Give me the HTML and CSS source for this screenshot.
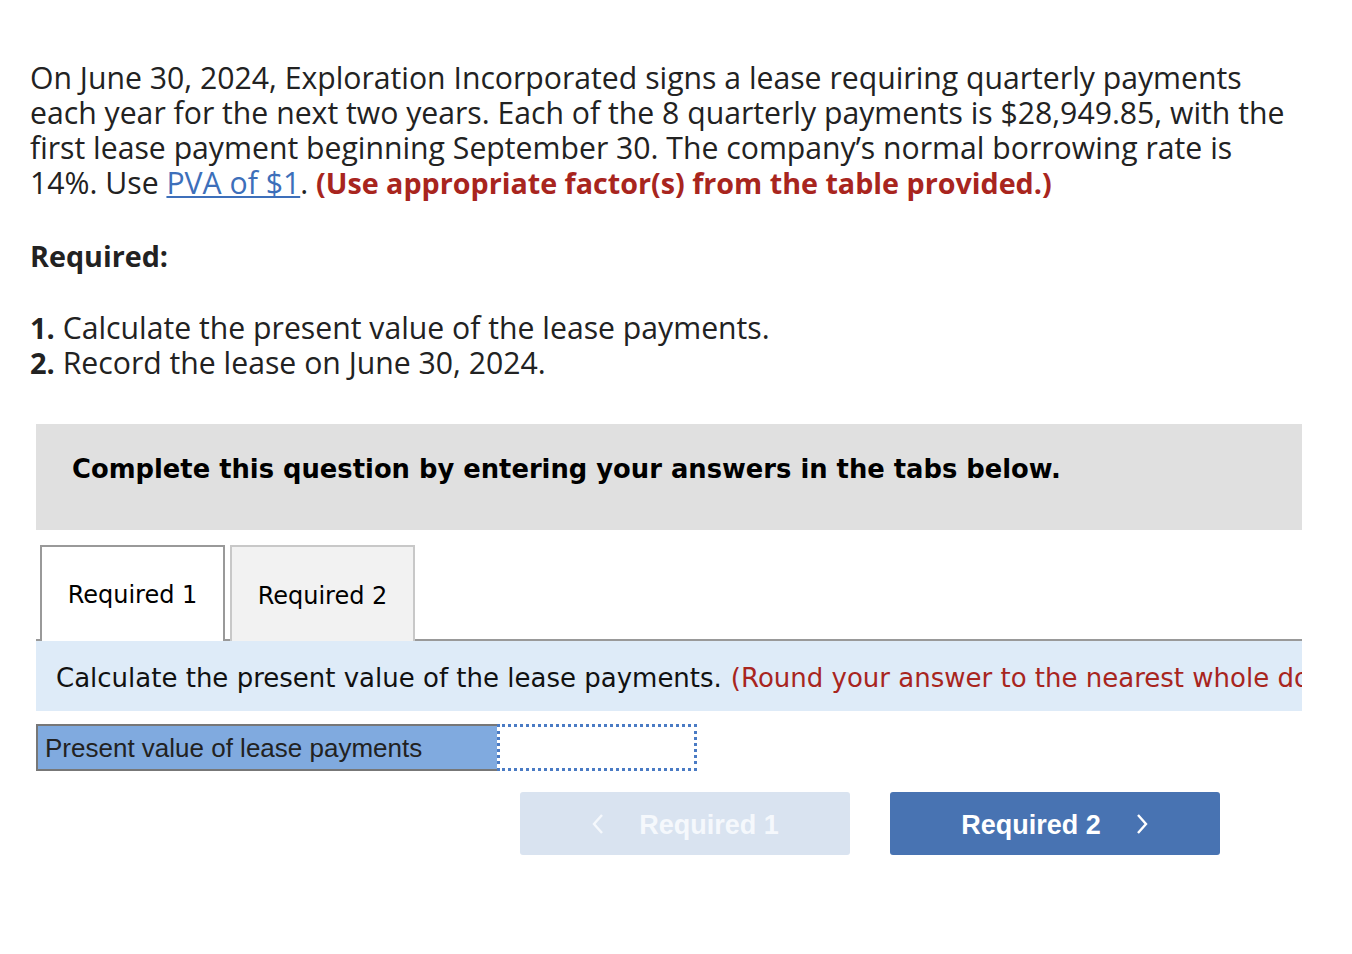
FILE: index.html
```html
<!DOCTYPE html>
<html lang="en">
<head>
<meta charset="utf-8">
<title>Lease question</title>
<link rel="stylesheet" href="styles.css">
</head>
<body>
<main class="page">
  <p class="intro">On June 30, 2024, Exploration Incorporated signs a lease requiring quarterly payments each year for the next two years. Each of the 8 quarterly payments is $28,949.85, with the first lease payment beginning September 30. The company’s normal borrowing rate is 14%. Use <a class="link" href="#">PVA of $1</a>. <strong class="warn">(Use appropriate factor(s) from the table provided.)</strong></p>
  <p class="req-head">Required:</p>
  <ol class="req-list">
    <li><b>1.</b> Calculate the present value of the lease payments.</li>
    <li><b>2.</b> Record the lease on June 30, 2024.</li>
  </ol>

  <section class="question">
    <div class="banner">Complete this question by entering your answers in the tabs below.</div>
    <div class="tabs">
      <div class="tab active">Required 1</div>
      <div class="tab">Required 2</div>
    </div>
    <div class="instruction">Calculate the present value of the lease payments. <span class="warn-light">(Round your answer to the nearest whole dollar.)</span></div>
    <div class="answer-row">
      <div class="label-cell">Present value of lease payments</div>
      <div class="input-cell"></div>
    </div>
    <div class="nav">
      <button class="nav-btn prev" type="button">
        <svg class="chev" width="14" height="24" viewBox="0 0 14 24"><path d="M11 3 L3 12 L11 21" fill="none" stroke="currentColor" stroke-width="2.4"/></svg>
        <span>Required 1</span>
      </button>
      <button class="nav-btn next" type="button">
        <span>Required 2</span>
        <svg class="chev" width="14" height="24" viewBox="0 0 14 24"><path d="M3 3 L11 12 L3 21" fill="none" stroke="currentColor" stroke-width="2.4"/></svg>
      </button>
    </div>
  </section>
</main>
</body>
</html>
```

FILE: styles.css
```css
* { box-sizing: border-box; }
html, body { margin: 0; padding: 0; background: #fff; }
.page {
  padding: 60px 40px 40px 30px;
  font-family: "Open Sans", Lato, sans-serif;
  color: #222;
}
.intro {
  margin: 0;
  font-size: 30.2px;
  line-height: 35px;
  width: 1260px;
}
.link { color: #3d6fba; text-decoration: underline; text-decoration-thickness: 2px; text-underline-offset: 2px; }
.warn { color: #a8251e; font-weight: 700; font-size: 28.7px; }
.req-head {
  margin: 38px 0 0;
  font-size: 28.7px;
  line-height: 35px;
  font-weight: 700;
}
.req-list {
  list-style: none;
  margin: 37px 0 0;
  padding: 0;
  font-size: 30.2px;
  line-height: 35px;
}
.req-list b { font-weight: 700; font-size: 29px; }

.question {
  margin: 44px 0 0 6px;
  width: 1266px;
  font-family: "DejaVu Sans", Verdana, sans-serif;
  color: #000;
}
.banner {
  background: #e0e0e0;
  height: 106px;
  padding: 28px 36px 0;
  font-size: 25.8px;
  font-weight: 700;
  line-height: 34px;
}
.tabs {
  display: flex;
  gap: 5px;
  margin-top: 15px;
  padding-left: 4px;
  border-bottom: 2px solid #999;
  height: 96px;
}
.tab {
  width: 185px;
  height: 96px;
  display: flex;
  align-items: center;
  justify-content: center;
  font-size: 24px;
  background: #f2f2f2;
  border: 2px solid #c8c8c8;
  border-bottom: none;
  padding-top: 3px;
}
.tab.active {
  background: #fff;
  border-color: #999;
  height: 96px;
  margin-bottom: -2px;
  padding-top: 2px;
  padding-bottom: 0;
}
.instruction {
  background: #deebf8;
  height: 70px;
  padding: 3px 0 0 20px;
  display: flex;
  align-items: center;
  white-space: nowrap;
  overflow: hidden;
  font-size: 26px;
  color: #111;
}
.warn-light { color: #a8251e; margin-left: 9px; }
.answer-row {
  display: flex;
  margin-top: 13px;
  height: 47px;
}
.label-cell {
  width: 461px;
  background: #80aadf;
  border: 2px solid #777;
  border-right: none;
  font-family: "Liberation Sans", Arial, sans-serif;
  font-size: 26px;
  color: #222;
  display: flex;
  align-items: center;
  padding: 1px 0 0 7px;
}
.input-cell {
  width: 200px;
  border: 3px dotted #4a7bc4;
  background: #fff;
}
.nav {
  display: flex;
  gap: 40px;
  margin-top: 21px;
  padding-left: 484px;
}
.nav-btn {
  width: 330px;
  height: 63px;
  border: none;
  border-radius: 3px;
  display: flex;
  align-items: center;
  justify-content: center;
  gap: 34px;
  font-family: "Liberation Sans", Arial, sans-serif;
  font-size: 27px;
  font-weight: 700;
  color: #fff;
  padding: 3px 0 0;
}
.nav-btn.prev { background: #d9e3f0; color: #f5f8fc; }
.nav-btn.next { background: #4873b2; }
.chev { display: block; margin-top: -3px; }
```
